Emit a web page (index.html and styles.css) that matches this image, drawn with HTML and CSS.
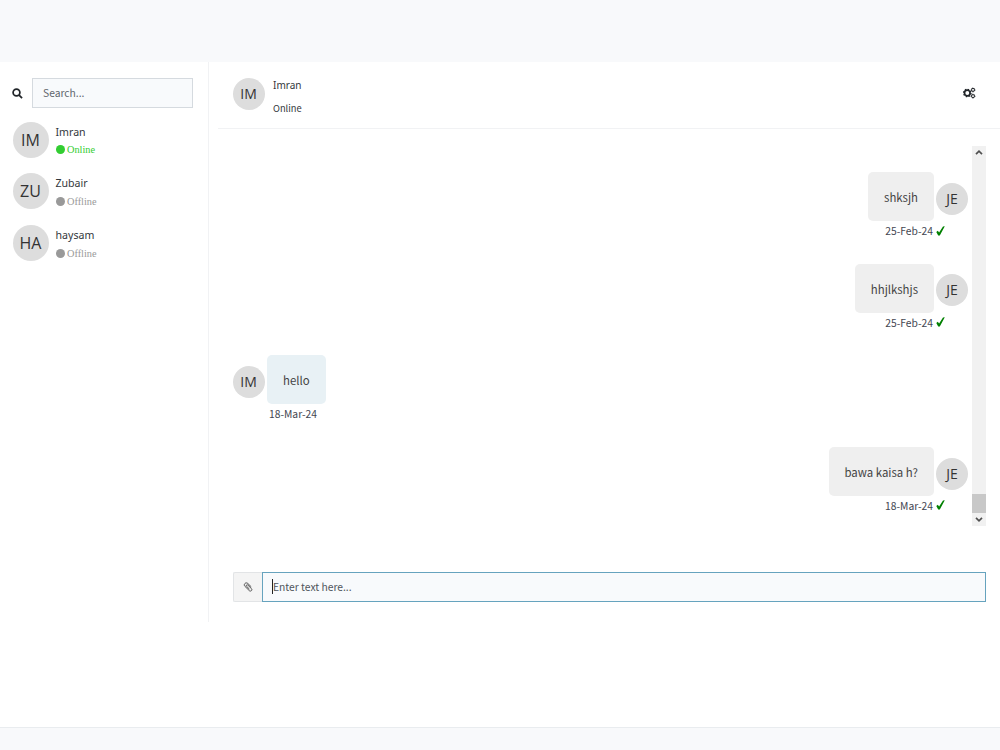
FILE: index.html
```html
<!DOCTYPE html>
<html>
<head>
<meta charset="utf-8" />
<title>Chat</title>
<link rel="stylesheet" href="styles.css">
</head>
<body>
<div class="topbar"></div>
<div class="chat-app">
	<div class="people-list">
		<div class="search">
			<svg class="icon-search" viewBox="0 0 12 12"><circle cx="4.9" cy="4.9" r="3.7"/><path d="M7.7 7.7L11 11"/></svg>
			<input type="text" placeholder="Search...">
		</div>
		<ul>
			<li>
				<span class="avatar big">IM</span>
				<div class="about">
					<div class="name">Imran</div>
					<div class="status online"><i></i>Online</div>
				</div>
			</li>
			<li>
				<span class="avatar big">ZU</span>
				<div class="about">
					<div class="name">Zubair</div>
					<div class="status"><i></i>Offline</div>
				</div>
			</li>
			<li>
				<span class="avatar big">HA</span>
				<div class="about">
					<div class="name">haysam</div>
					<div class="status"><i></i>Offline</div>
				</div>
			</li>
		</ul>
	</div>
	<div class="chat">
		<div class="chat-header">
			<span class="avatar">IM</span>
			<div class="chat-about">
				<div class="name">Imran</div>
				<div class="seen">Online</div>
			</div>
			<svg class="icon-cogs" viewBox="0 0 13 12">
				<circle class="teeth" cx="4.3" cy="6" r="3.7"/>
				<circle class="ring" cx="4.3" cy="6" r="2.8"/>
				<circle class="small-teeth" cx="10" cy="2.9" r="2"/>
				<circle class="small" cx="10" cy="2.9" r="1.5"/>
				<circle class="small-teeth" cx="10" cy="9.1" r="2"/>
				<circle class="small" cx="10" cy="9.1" r="1.5"/>
			</svg>
		</div>
		<div class="chat-body">
			<div class="history">
				<div class="msg right">
					<div class="row"><div class="bubble">shksjh</div><span class="avatar">JE</span></div>
					<div class="time">25-Feb-24 <svg class="tick" viewBox="0 0 9 10"><path d="M0.3 6L1.8 4.8L3.1 6.5L7 0.4L8.8 0.2L3.8 9.6L2.2 9.6Z"/></svg></div>
				</div>
				<div class="msg right">
					<div class="row"><div class="bubble">hhjlkshjs</div><span class="avatar">JE</span></div>
					<div class="time">25-Feb-24 <svg class="tick" viewBox="0 0 9 10"><path d="M0.3 6L1.8 4.8L3.1 6.5L7 0.4L8.8 0.2L3.8 9.6L2.2 9.6Z"/></svg></div>
				</div>
				<div class="msg">
					<div class="row"><span class="avatar">IM</span><div class="bubble">hello</div></div>
					<div class="time">18-Mar-24</div>
				</div>
				<div class="msg right">
					<div class="row"><div class="bubble">bawa kaisa h?</div><span class="avatar">JE</span></div>
					<div class="time">18-Mar-24 <svg class="tick" viewBox="0 0 9 10"><path d="M0.3 6L1.8 4.8L3.1 6.5L7 0.4L8.8 0.2L3.8 9.6L2.2 9.6Z"/></svg></div>
				</div>
			</div>
			<div class="scrollbar">
				<svg viewBox="0 0 8 5"><path d="M1 4.2L4 1.2L7 4.2"/></svg>
				<div class="thumb"></div>
				<svg viewBox="0 0 8 5"><path d="M1 0.8L4 3.8L7 0.8"/></svg>
			</div>
		</div>
		<div class="chat-message">
			<div class="attach">
				<svg class="icon-clip" viewBox="0 0 12 12"><path d="M9.9 5.8L5.8 1.8C4.6.7 3.2.9 2.3 1.8S1.2 4.1 2.3 5.2L7.5 10.3C8.3 11.1 9.4 11 10.1 10.4S10.9 8.7 10.1 7.9L5.8 3.7C5.2 3.1 4.6 3.2 4.2 3.6S3.8 4.7 4.3 5.2L7.7 8.5"/></svg>
			</div>
			<div class="text-input"><span class="caret"></span>Enter text here...</div>
		</div>
	</div>
</div>
<div class="footer"></div>
</body>
</html>
```
FILE: styles.css
```css
*{
	box-sizing:border-box;
}
body{
	margin:0;
	height:750px;
	display:flex;
	flex-direction:column;
	background:#fff;
	color:#32373c;
	font-family:"Noto Sans CJK SC","Noto Sans",sans-serif;
	font-size:10.3px;
	overflow:hidden;
}
svg{
	display:block;
	flex:none;
}
.topbar{
	height:62px;
	background:#f8f9fb;
}
.chat-app{
	height:560px;
	display:flex;
}
.people-list{
	width:209px;
	border-right:1px solid #f1f2f4;
	padding:16px 15px 0 12px;
}
.search{
	display:flex;
	align-items:center;
}
.icon-search{
	width:11px;
	height:11px;
	margin-right:9px;
	fill:none;
	stroke:#212529;
	stroke-width:1.9;
}
.search input{
	width:161px;
	height:30px;
	padding:0 9px 1px 10px;
	border:1px solid #d5dadf;
	background:#f8fafc;
	font:10.3px "Noto Sans CJK SC",sans-serif;
	outline:none;
}
.search input::placeholder{
	color:#5f666d;
}
.people-list ul{
	list-style:none;
	margin:13px 0 0 1px;
	padding:0;
}
.people-list li{
	display:flex;
	height:51.7px;
	padding-top:.8px;
}
.avatar{
	display:flex;
	flex:none;
	align-items:center;
	justify-content:center;
	width:32px;
	height:32px;
	padding:0 1px 1px 0;
	border-radius:50%;
	background:#ddd;
	color:#333;
	font-family:"Open Sans",sans-serif;
	font-size:14px;
}
.right .avatar{
	padding-right:0;
}
.avatar.big{
	width:36px;
	height:36px;
	padding-bottom:0;
	font-size:16px;
}
.about{
	padding:1px 0 0 6.5px;
}
.name{
	line-height:18px;
	font-family:"Noto Sans",sans-serif;
	font-size:10.6px;
}
.status{
	display:flex;
	align-items:center;
	height:18px;
	color:#999;
	font-family:"Liberation Serif",serif;
	font-size:10.3px;
}
.status i{
	width:9px;
	height:9px;
	margin-right:2.5px;
	border-radius:50%;
	background:#999;
}
.online{
	color:#32cd32;
}
.online i{
	background:#32cd32;
}
.chat{
	flex:1;
	margin-left:9px;
}
.chat-header{
	display:flex;
	height:67px;
	padding:16px 25px 0 15px;
	border-bottom:1px solid #f1f2f4;
}
.chat-about{
	flex:1;
	padding-left:8px;
}
.chat-header .name{
	line-height:15px;
	font-size:10px;
}
.seen{
	margin-top:7px;
	line-height:16px;
	font-size:9.3px;
}
.icon-cogs{
	width:13px;
	height:12px;
	margin:9px -1px 0 0;
	fill:none;
	stroke:#212529;
}
.teeth{
	stroke-width:1.3;
	stroke-dasharray:1.5 1.4;
}
.ring{
	stroke-width:1.7;
}
.small-teeth{
	stroke-width:.8;
	stroke-dasharray:.8 .77;
}
.small{
	stroke-width:1;
}
.chat-body{
	display:flex;
	height:380px;
	margin:17px 14px 0 15px;
}
.history{
	flex:1;
	padding:26px 4px 0 0;
}
.msg{
	height:91.6px;
}
.row{
	display:flex;
	gap:2px;
}
.row .avatar{
	margin-top:10.8px;
}
.right .row{
	justify-content:flex-end;
}
.bubble{
	height:49px;
	padding:0 16px;
	border-radius:5px;
	background:#e8f1f5;
	color:#444;
	font-size:11.4px;
	line-height:50px;
}
.right .bubble{
	background:#efefef;
}
.time{
	display:flex;
	align-items:center;
	gap:3px;
	height:19px;
	padding-left:36px;
	color:#434651;
	font-size:10.3px;
}
.right .time{
	justify-content:flex-end;
	padding:0 23px 0 0;
}
.tick{
	width:9px;
	height:10px;
	fill:green;
}
.scrollbar{
	display:flex;
	flex-direction:column;
	align-items:center;
	width:14px;
	padding:4px 0;
	background:#f1f1f1;
}
.scrollbar svg{
	width:8px;
	height:5px;
	fill:none;
	stroke:#505050;
	stroke-width:1.7;
}
.thumb{
	width:14px;
	height:19px;
	margin:auto 0 4px;
	background:#c8c8c8;
}
.chat-message{
	display:flex;
	height:30px;
	margin:46px 14px 0 15px;
}
.attach{
	display:flex;
	align-items:center;
	justify-content:center;
	width:29px;
	border:1px solid #e2e4e6;
	border-right:0;
	border-radius:2px 0 0 2px;
	background:#f4f4f4;
}
.icon-clip{
	width:10px;
	height:10px;
	fill:none;
	stroke:#444;
	stroke-width:1.1;
}
.text-input{
	flex:1;
	display:flex;
	align-items:center;
	padding:0 0 1px 9px;
	border:1px solid #66a3be;
	background:#f8fafc;
	color:#50565c;
}
.caret{
	width:1px;
	height:15px;
	background:#222;
}
.footer{
	flex:1;
	margin-top:105px;
	border-top:1px solid #e9ecef;
	background:#f8f9fb;
}
```
